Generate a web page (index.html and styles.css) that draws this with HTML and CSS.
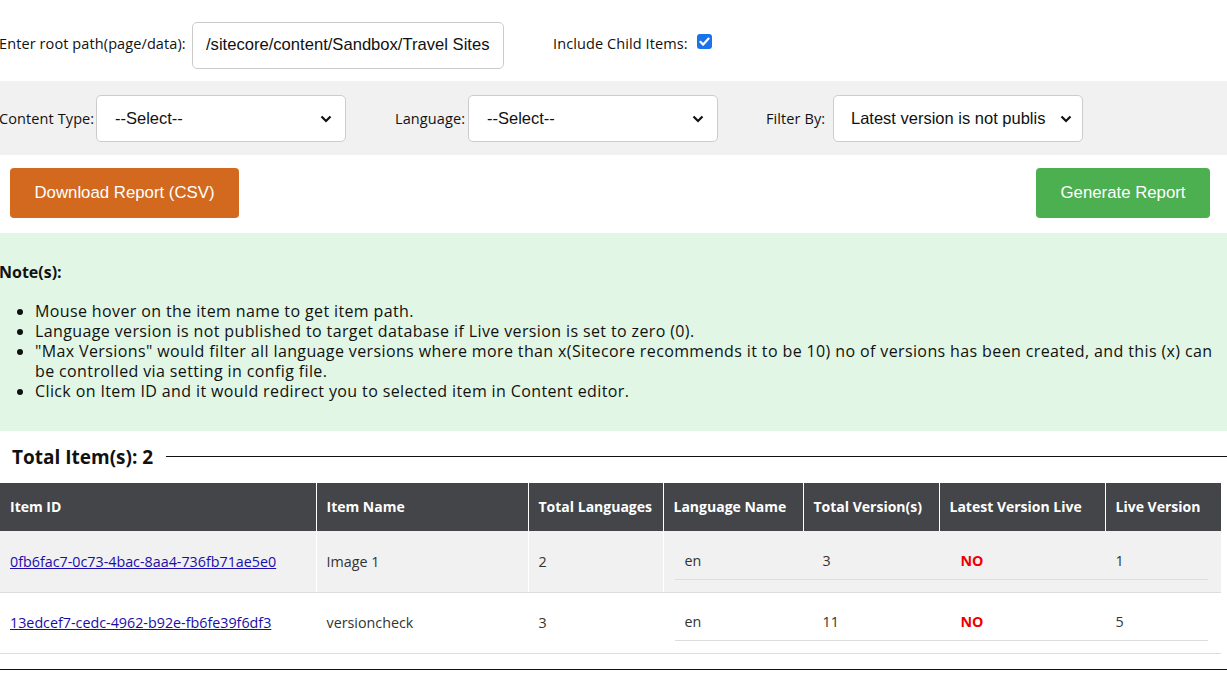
FILE: index.html
```html
<!DOCTYPE html>
<html lang="en">
<head>
<meta charset="utf-8">
<title>Version Report</title>
<link rel="stylesheet" href="styles.css">
</head>
<body>
<div class="row row-path">
  <label class="lbl lbl-path">Enter root path(page/data):</label>
  <input class="path-input" type="text" value="/sitecore/content/Sandbox/Travel Sites">
  <label class="lbl lbl-child">Include Child Items:</label>
  <span class="check"><svg width="15" height="15" viewBox="0 0 15 15"><rect width="15" height="15" rx="3" fill="#1a73e8"/><path d="M3.4 7.8 L6.2 10.6 L11.6 4.6" fill="none" stroke="#fff" stroke-width="2.2" stroke-linecap="round" stroke-linejoin="round"/></svg></span>
</div>
<div class="row row-filters">
  <label class="lbl lbl-ct">Content Type:</label>
  <div class="select"><span>--Select--</span><svg class="chev" width="12" height="8" viewBox="0 0 12 8"><path d="M1.5 1.5 L6 6 L10.5 1.5" fill="none" stroke="#111" stroke-width="2.2"/></svg></div>
  <label class="lbl lbl-lang">Language:</label>
  <div class="select"><span>--Select--</span><svg class="chev" width="12" height="8" viewBox="0 0 12 8"><path d="M1.5 1.5 L6 6 L10.5 1.5" fill="none" stroke="#111" stroke-width="2.2"/></svg></div>
  <label class="lbl lbl-filter">Filter By:</label>
  <div class="select select-filter"><span>Latest version is not publis</span><svg class="chev" width="12" height="8" viewBox="0 0 12 8"><path d="M1.5 1.5 L6 6 L10.5 1.5" fill="none" stroke="#111" stroke-width="2.2"/></svg></div>
</div>
<div class="row row-buttons">
  <button class="btn btn-download">Download Report (CSV)</button>
  <button class="btn btn-generate">Generate Report</button>
</div>
<div class="notes">
  <p class="notes-title">Note(s):</p>
  <ul>
    <li>Mouse hover on the item name to get item path.</li>
    <li>Language version is not published to target database if Live version is set to zero (0).</li>
    <li>"Max Versions" would filter all language versions where more than x(Sitecore recommends it to be 10) no of versions has been created, and this (x) can be controlled via setting in config file.</li>
    <li>Click on Item ID and it would redirect you to selected item in Content editor.</li>
  </ul>
</div>
<div class="results">
  <div class="total"><span class="total-text">Total Item(s): 2</span><span class="total-line"></span></div>
  <table class="grid">
    <colgroup>
      <col class="c1"><col class="c2"><col class="c3"><col class="c4"><col class="c5"><col class="c6"><col class="c7">
    </colgroup>
    <thead>
      <tr><th>Item ID</th><th>Item Name</th><th>Total Languages</th><th>Language Name</th><th>Total Version(s)</th><th>Latest Version Live</th><th>Live Version</th></tr>
    </thead>
    <tbody>
      <tr class="odd">
        <td><a href="#">0fb6fac7-0c73-4bac-8aa4-736fb71ae5e0</a></td>
        <td>Image 1</td>
        <td>2</td>
        <td colspan="4" class="nested-cell">
          <div class="nested"><span>en</span><span>3</span><span class="no">NO</span><span>1</span></div>
        </td>
      </tr>
      <tr>
        <td><a href="#">13edcef7-cedc-4962-b92e-fb6fe39f6df3</a></td>
        <td>versioncheck</td>
        <td>3</td>
        <td colspan="4" class="nested-cell">
          <div class="nested"><span>en</span><span>11</span><span class="no">NO</span><span>5</span></div>
        </td>
      </tr>
    </tbody>
  </table>
</div>
</body>
</html>
```
FILE: styles.css
```css
* { box-sizing: border-box; }
html, body { margin: 0; padding: 0; background: #fff; }
body { font-family: "Open Sans", "Noto Sans", sans-serif; color: #111; width: 1227px; overflow: hidden; }

.row { display: flex; align-items: center; }
.lbl { font-size: 14.5px; letter-spacing: 0.1px; color: #111; white-space: nowrap; }

.row-path { height: 81px; padding-top: 5px; }
.lbl-path { margin-left: -1px; width: 193px; }
.path-input {
  width: 312px; height: 47px; border: 1px solid #ccc; border-radius: 5px;
  font-family: "Liberation Sans", Arial, sans-serif; font-size: 16.6px; color: #111;
  padding: 0 13px; background: #fff; outline: none; margin-top: 4px;
}
.lbl-child { margin-left: 49px; }
.check { display: inline-flex; margin-left: 9px; margin-top: -3px; }

.row-filters { background: #f1f1f1; height: 74px; }
.lbl-ct { margin-left: -1px; width: 97px; }
.select {
  width: 250px; height: 47px; border: 1px solid #ccc; border-radius: 5px; background: #fff;
  display: flex; align-items: center; justify-content: space-between;
  padding: 0 13px 0 18px;
  font-family: "Liberation Sans", Arial, sans-serif; font-size: 16.5px; color: #111;
}
.chev { margin-top: 1px; }
.lbl-lang { margin-left: 49px; width: 73px; }
.lbl-filter { margin-left: 48px; width: 67px; }
.select-filter { padding-left: 17px; padding-right: 10px; }

.row-buttons { height: 78px; justify-content: space-between; padding: 0 17px 2px 10px; }
.btn {
  height: 50px; border: none; border-radius: 4px; color: #fff;
  font-family: "Liberation Sans", Arial, sans-serif; font-size: 16.8px;
}
.btn-download { background: #d2691e; width: 229px; }
.btn-generate { background: #4caf50; width: 174px; }

.notes { background: #e2f6e5; height: 198px; padding: 29px 0 0 0; }
.notes-title { margin: 0 0 0 -1px; font-weight: bold; font-size: 16px; line-height: 20px; }
.notes ul { margin: 19px 0 0 0; padding-left: 35px; font-size: 16px; letter-spacing: 0.38px; line-height: 20px; }
.notes li { padding-right: 0; }

.results { padding-top: 15px; border-bottom: 1px solid #111; padding-bottom: 15px; }
.total { display: flex; align-items: center; height: 22px; }
.total-text { font-weight: bold; font-size: 19px; padding-left: 12px; padding-right: 13px; white-space: nowrap; }
.total-line { flex: 1; height: 1px; background: #111; margin-top: -1px; }

.grid {
  margin-top: 15px; width: 1221px; border-collapse: collapse; table-layout: fixed;
  font-size: 14.3px; color: #333;
}
.c1 { width: 316px; } .c2 { width: 212px; } .c3 { width: 135px; } .c4 { width: 140px; }
.c5 { width: 136px; } .c6 { width: 166px; } .c7 { width: 116px; }
.grid th {
  background: #434549; color: #fff; font-weight: bold; text-align: left; font-size: 14px;
  height: 48px; padding: 0 10px 1px; border-right: 1px solid #fff; white-space: nowrap;
}
.grid th:last-child { border-right: none; }
.grid td {
  height: 61px; padding: 0 10px; border-right: 1px solid #fff; border-bottom: 1px solid #ddd;
  vertical-align: middle;
}
.grid tr.odd td { background: #f1f1f1; }
.grid a { color: #1a0dab; }
.grid td.nested-cell { padding: 0 13px 0 11px; border-right: none; }
.nested {
  display: grid; grid-template-columns: 138px 138px 155px 1fr;
  border-bottom: 1px solid #ddd; height: 38px; align-items: center; margin-top: -1px;
}
.nested span { padding-left: 10px; }
.nested .no { color: #e00; font-weight: bold; }
```
